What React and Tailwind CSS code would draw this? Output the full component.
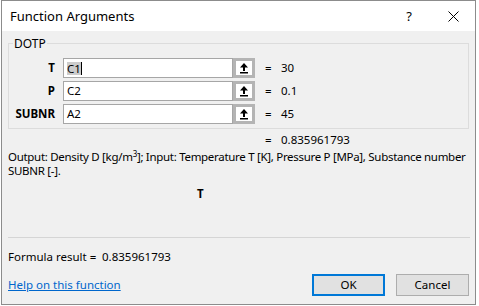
// Excel "Function Arguments" dialog
const rows = [
  { label: "T", ref: "C1", value: "30", active: true },
  { label: "P", ref: "C2", value: "0.1" },
  { label: "SUBNR", ref: "A2", value: "45" },
];

function CollapseIcon() {
  return (
    <svg width="10" height="11" viewBox="0 0 10 11" className="block">
      <path d="M5 0 L9 4.5 L6 4.5 L6 8 L4 8 L4 4.5 L1 4.5 Z" fill="#000" />
      <rect x="1" y="9" width="8" height="1.5" fill="#000" />
    </svg>
  );
}

function CloseIcon() {
  return (
    <svg width="11" height="11" viewBox="0 0 11 11" className="block">
      <path d="M0.5 0.5 L10.5 10.5 M10.5 0.5 L0.5 10.5" stroke="#000" strokeWidth="1" />
    </svg>
  );
}

function ArgRow({ label, refText, value, active }) {
  return (
    <div className="flex h-[20px] items-center">
      <div className="w-[46px] text-right font-bold">{label}</div>
      <div className="ml-[8px] flex h-[20px] w-[170px] items-center border border-[#a6a6a6] bg-white pl-[3px]">
        {active ? (
          <>
            <span className="bg-[#cccccc] leading-[13px]">{refText}</span>
            <span className="h-[13px] w-[1px] bg-black" />
          </>
        ) : (
          <span>{refText}</span>
        )}
      </div>
      <div className="flex h-[20px] w-[22px] items-center justify-center border-[3px] border-[#b4b4b4] bg-white">
        <CollapseIcon />
      </div>
      <div className="ml-[10px] w-[16px]">=</div>
      <div>{value}</div>
    </div>
  );
}

export default function App() {
  return (
    <div className="h-[306px] w-[479px] overflow-hidden bg-white font-['Segoe_UI','Noto_Sans',sans-serif] text-[11.5px] leading-[14px] text-black">
      <div className="ml-[1px] flex h-[305px] w-[475px] flex-col border border-[#8c8c8c] bg-[#f0f0f0]">
        {/* title bar */}
        <div className="flex h-[30px] shrink-0 items-center bg-white pl-[8px] pr-[16px]">
          <span className="text-[13px]">Function Arguments</span>
          <span className="ml-auto mr-[36px] text-[13px]">?</span>
          <CloseIcon />
        </div>

        {/* argument group */}
        <div className="relative ml-[6px] mt-[12px] w-[461px] border border-[#dcdcdc] pb-[4px] pt-[14px]">
          <span className="absolute -top-[8px] left-[4px] bg-[#f0f0f0] px-[1px] text-[12px] leading-[16px]">DOTP</span>
          <div className="flex flex-col gap-[3px]">
            {rows.map((r) => (
              <ArgRow key={r.label} label={r.label} refText={r.ref} value={r.value} active={r.active} />
            ))}
          </div>
        </div>

        <div className="ml-[263px] mt-[4px] flex">
          <span className="w-[16px]">=</span>
          <span>0.835961793</span>
        </div>

        <div className="ml-[6px] mt-[3px] flex flex-col whitespace-nowrap tracking-[-0.3px]">
          <span>
            Output: Density D [kg/m<span className="relative -top-[4px] text-[8px] leading-none">3</span>]; Input: Temperature T [K], Pressure P [MPa], Substance number
          </span>
          <span>SUBNR [-].</span>
        </div>

        <div className="ml-[195px] mt-[9px] font-bold">T</div>

        <div className="ml-[6px] mt-[36px] h-[1px] w-[462px] bg-[#d5d5d5]" />

        <div className="ml-[6px] mt-[12px] flex">
          <span className="w-[94px] shrink-0">Formula result =</span>
          <span>0.835961793</span>
        </div>

        <div className="ml-[6px] mr-[6px] mt-[10px] flex items-center">
          <a className="text-[#0066cc] underline">Help on this function</a>
          <button className="ml-auto h-[22px] w-[73px] border-2 border-[#0078d7] bg-[#e1e1e1]">OK</button>
          <button className="ml-[11px] h-[22px] w-[73px] border border-[#adadad] bg-[#e1e1e1]">Cancel</button>
        </div>
      </div>
    </div>
  );
}
